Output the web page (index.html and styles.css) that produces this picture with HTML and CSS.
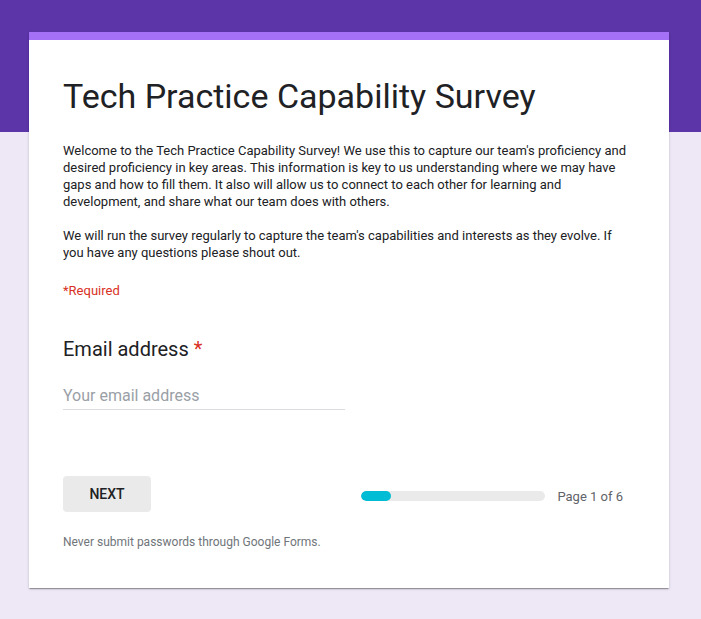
FILE: index.html
```html
<!DOCTYPE html>
<html>
<head>
<meta charset="utf-8">
<link rel="stylesheet" href="styles.css">
</head>
<body>
<div class="page">
  <div class="card">
    <h1 class="title">Tech Practice Capability Survey</h1>
    <div class="desc">
      <p>Welcome to the Tech Practice Capability Survey! We use this to capture our team's proficiency and desired proficiency in key areas. This information is key to us understanding where we may have gaps and how to fill them. It also will allow us to connect to each other for learning and development, and share what our team does with others.</p>
      <p>We will run the survey regularly to capture the team's capabilities and interests as they evolve. If you have any questions please shout out.</p>
    </div>
    <div class="required">*Required</div>
    <div class="question">
      <div class="q-label">Email address <span class="star">*</span></div>
      <div class="input">Your email address</div>
    </div>
    <div class="nav">
      <button class="next">NEXT</button>
      <div class="progress">
        <div class="track"><div class="fill" style="width:30px"></div></div>
        <span class="page-label">Page 1 of 6</span>
      </div>
    </div>
    <div class="footnote">Never submit passwords through Google Forms.</div>
  </div>
</div>
</body>
</html>
```
FILE: styles.css
```css
html, body {
  margin: 0;
  padding: 0;
}
body {
  background: linear-gradient(to bottom, #5c35a9 0, #5c35a9 132px, #ede7f6 132px, #ede7f6 100%);
  min-height: 619px;
  font-family: Roboto, "Noto Sans", Arial, sans-serif;
}
.page {
  padding: 32px 0 0 29px;
}
.card {
  width: 640px;
  box-sizing: border-box;
  background: #fff;
  border-top: 8px solid #a470f6;
  box-shadow: 0 2px 1px -1px rgba(0,0,0,0.2), 0 1px 1px 0 rgba(0,0,0,0.14), 0 1px 3px 0 rgba(0,0,0,0.12);
  padding: 0 34px 0 34px;
  height: 556px;
}
.title {
  margin: 0;
  padding-top: 36px;
  font-size: 34px;
  font-weight: 400;
  line-height: 40px;
  color: #202124;
}
.desc {
  margin-top: 26px;
  font-size: 13px;
  line-height: 17px;
  color: #202124;
}
.desc p {
  margin: 0 0 17px 0;
}
.required {
  margin-top: 21px;
  font-size: 13px;
  line-height: 17px;
  color: #d93025;
}
.question {
  margin-top: 38px;
}
.q-label {
  font-size: 20px;
  line-height: 24px;
  color: #202124;
}
.star {
  color: #d93025;
}
.input {
  margin-top: 25px;
  width: 282px;
  font-size: 16px;
  line-height: 20px;
  color: #9aa0a6;
  padding-bottom: 3px;
  border-bottom: 1px solid #dadce0;
}
.nav {
  margin-top: 66px;
  display: flex;
  align-items: center;
  justify-content: space-between;
}
.next {
  width: 88px;
  height: 36px;
  border: none;
  border-radius: 4px;
  background: #eaeaea;
  font-family: Roboto, "Noto Sans", Arial, sans-serif;
  font-size: 14px;
  font-weight: 500;
  color: #202124;
  padding: 0;
}
.progress {
  display: flex;
  align-items: center;
  gap: 12px;
  margin-right: 12px;
  margin-top: 4px;
}
.track {
  width: 184px;
  height: 10px;
  border-radius: 5px;
  background: #eaeaea;
  overflow: hidden;
}
.fill {
  height: 100%;
  background: #00bcd4;
  border-radius: 5px;
}
.page-label {
  font-size: 13px;
  color: #5f6368;
}
.footnote {
  margin-top: 22px;
  font-size: 12px;
  line-height: 16px;
  color: #70757a;
}
```
